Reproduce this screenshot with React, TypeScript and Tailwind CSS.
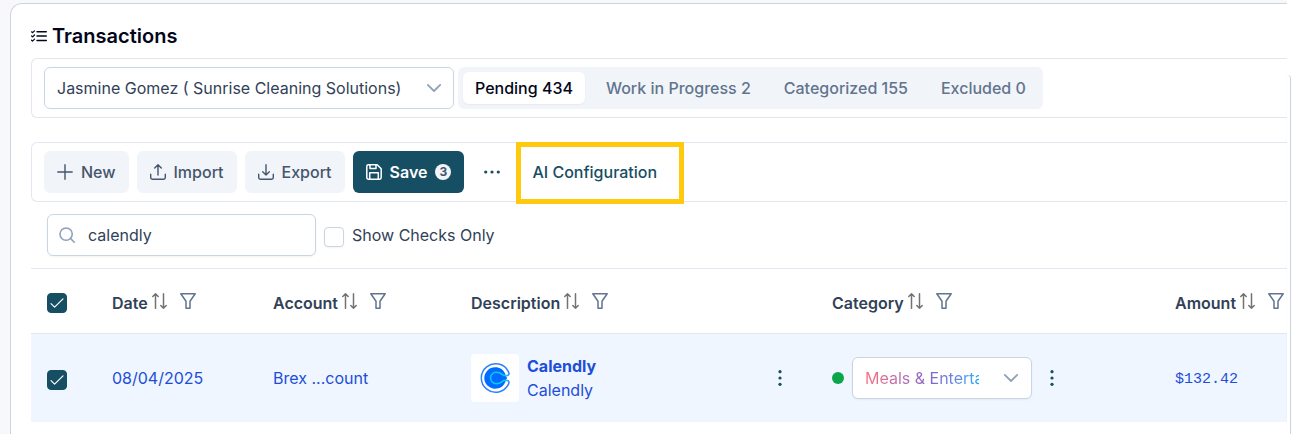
import React from 'react';

type IconProps = { className?: string };

const ListCheckIcon = ({ className }: IconProps) => (
  <svg viewBox="0 0 16 12" className={className} fill="none" stroke="currentColor" strokeLinecap="round" strokeLinejoin="round" aria-hidden="true">
    <path d="M.6 1.8l1 .9L3.5.8M.6 6l1 .9L3.5 5M.6 10.2l1 .9 1.9-1.9" strokeWidth="1.2" />
    <path d="M6 1.7h9.3M6 6h9.3M6 10.5h9.3" strokeWidth="1.4" />
  </svg>
);

const ChevronIcon = ({ className }: IconProps) => (
  <svg viewBox="0 0 16 16" className={className} fill="none" stroke="currentColor" strokeWidth="1.8" strokeLinecap="round" strokeLinejoin="round" aria-hidden="true">
    <path d="M1.8 4.9L8 11l6.2-6.1" />
  </svg>
);

const PlusIcon = ({ className }: IconProps) => (
  <svg viewBox="0 0 16 16" className={className} fill="none" stroke="currentColor" strokeWidth="1.4" strokeLinecap="round" aria-hidden="true">
    <path d="M8 .8v14.4M.8 8h14.4" />
  </svg>
);

const UploadIcon = ({ className }: IconProps) => (
  <svg viewBox="0 0 16 16" className={className} fill="none" stroke="currentColor" strokeWidth="1.4" strokeLinecap="round" strokeLinejoin="round" aria-hidden="true">
    <path d="M8 11V.8M4.7 4L8 .8 11.3 4M.7 10.3v3.3c0 1 .7 1.7 1.7 1.7h11.2c1 0 1.7-.7 1.7-1.7v-3.3" />
  </svg>
);

const DownloadIcon = ({ className }: IconProps) => (
  <svg viewBox="0 0 16 16" className={className} fill="none" stroke="currentColor" strokeWidth="1.4" strokeLinecap="round" strokeLinejoin="round" aria-hidden="true">
    <path d="M8 .8V11M4.7 7.8L8 11l3.3-3.2M.7 10.3v3.3c0 1 .7 1.7 1.7 1.7h11.2c1 0 1.7-.7 1.7-1.7v-3.3" />
  </svg>
);

const SaveIcon = ({ className }: IconProps) => (
  <svg viewBox="0 0 16 16" className={className} fill="none" stroke="currentColor" strokeWidth="1.5" strokeLinejoin="round" aria-hidden="true">
    <path d="M2.4.8h8.8l4 4v8.8c0 1-.7 1.6-1.6 1.6H2.4c-.9 0-1.6-.7-1.6-1.6V2.4C.8 1.5 1.5.8 2.4.8z" />
    <path d="M4 .9v3.7h6V.9M3.7 15V8.7h8.6V15" />
  </svg>
);

const SearchIcon = ({ className }: IconProps) => (
  <svg viewBox="0 0 18 18" className={className} fill="none" stroke="currentColor" strokeWidth="1.8" strokeLinecap="round" aria-hidden="true">
    <circle cx="8" cy="8" r="6.9" />
    <path d="M13 13l4 4" />
  </svg>
);

const SortIcon = ({ className }: IconProps) => (
  <svg viewBox="0 0 16 16" className={className} fill="none" stroke="currentColor" strokeWidth="1.5" strokeLinecap="round" strokeLinejoin="round" aria-hidden="true">
    <path d="M3.5 15.3V.8M.8 3.5L3.5.8l2.7 2.7M11.5.8v14.4M8.8 12.5l2.7 2.7 2.7-2.7" />
  </svg>
);

const FilterIcon = ({ className }: IconProps) => (
  <svg viewBox="0 0 16 16" className={className} fill="none" stroke="currentColor" strokeWidth="1.5" strokeLinejoin="round" aria-hidden="true">
    <path d="M.8.8h14.4L10 8.3v6.9H6V8.3z" />
  </svg>
);

const DotsIcon = ({ className }: IconProps) => (
  <svg viewBox="0 0 16 16" className={className} fill="currentColor" aria-hidden="true">
    <circle cx="1.7" cy="8" r="1.6" />
    <circle cx="8" cy="8" r="1.6" />
    <circle cx="14.3" cy="8" r="1.6" />
  </svg>
);

const CalendlyLogo = ({ className }: IconProps) => (
  <svg viewBox="0 0 32 32" className={className} fill="none" strokeLinecap="round" role="img" aria-label="Calendly">
    <path d="M28.5 13.4C30.2 13 30.4 11.6 29.5 9.8A14.3 14.3 0 1 0 29.5 22.2C30.4 20.4 30.2 19 28.500 18.600" stroke="#2b83fb" strokeWidth="1.5" />
    <path d="M26.200 12C24.800 7.800 21 5.300 16 5.300a10.700 10.700 0 0 0 0 21.400c5 0 8.800-2.500 10.200-6.700L28 16z" fill="#006bff" />
    <path d="M28.500 13.400c-2 .6-3.700.4-5.400-1-1.800-1.500-3.600-2.100-5.900-2.100a5.700 5.700 0 0 0 0 11.400c2.300 0 4.100-.6 5.900-2.100 1.700-1.400 3.400-1.600 5.400-1" stroke="#0acbee" strokeWidth="1.5" />
  </svg>
);

const tabs = ['Pending 434', 'Work in Progress 2', 'Categorized 155', 'Excluded 0'];
const columns = ['Date', 'Account', 'Description', 'Category', 'Amount'];

const CheckedBox: React.FC<{ label: string }> = ({ label }) => (
  <span className="grid size-5">
    <input
      type="checkbox"
      defaultChecked
      aria-label={label}
      className="peer col-start-1 row-start-1 size-5 appearance-none rounded-sm border border-slate-300 bg-white checked:border-[#164e63] checked:bg-[#164e63]"
    />
    <svg viewBox="0 0 14 14" className="pointer-events-none invisible col-start-1 row-start-1 size-3.5 place-self-center text-white peer-checked:visible" fill="none" stroke="currentColor" strokeWidth="1.2" strokeLinecap="round" strokeLinejoin="round" aria-hidden="true">
      <path d="M1 7.6l3.6 3.6L13 2.8" />
    </svg>
  </span>
);

const TransactionsHeader: React.FC = () => (
  <div className="flex h-[60px] items-center gap-1 rounded-l-md border border-r-0 border-slate-200 pl-3">
    <div className="grid w-[410px] items-center">
      <select
        aria-label="Client"
        className="col-start-1 row-start-1 h-[42px] w-full appearance-none rounded-md border border-slate-300 bg-white pr-10 pl-3 text-slate-700"
      >
        <option>Jasmine Gomez ( Sunrise Cleaning Solutions)</option>
      </select>
      <ChevronIcon className="pointer-events-none col-start-1 row-start-1 mr-3 size-4 justify-self-end text-slate-400" />
    </div>
    <div role="tablist" className="flex h-[42px] items-center gap-[9px] rounded-md bg-slate-100 px-[5px] font-medium whitespace-nowrap text-slate-500">
      {tabs.map((tab, i) => (
        <button
          key={tab}
          role="tab"
          aria-selected={i === 0}
          className={i === 0 ? 'h-8 rounded-md bg-white px-3 text-slate-950 shadow-xs' : 'h-8 rounded-md px-3'}
        >
          {tab}
        </button>
      ))}
    </div>
  </div>
);

const Toolbar: React.FC = () => (
  <div className="mt-6 flex h-[60px] items-center gap-2 rounded-l-md border border-r-0 border-slate-200 pl-3 font-medium whitespace-nowrap text-slate-600">
    <button className="flex h-[42px] items-center gap-2 rounded-md bg-slate-100 px-[13px]">
      <PlusIcon className="size-4" /> New
    </button>
    <button className="flex h-[42px] items-center gap-2 rounded-md bg-slate-100 px-[13px]">
      <UploadIcon className="size-4" /> Import
    </button>
    <button className="flex h-[42px] items-center gap-2 rounded-md bg-slate-100 px-[13px]">
      <DownloadIcon className="size-4" /> Export
    </button>
    <button className="flex h-[42px] items-center gap-2 rounded-md bg-[#164e63] px-[13px] font-semibold text-white">
      <SaveIcon className="size-4" /> Save
      <span className="size-4 rounded-full bg-slate-100 text-xs leading-4 font-bold text-slate-600">3</span>
    </button>
    <button aria-label="More actions" className="grid h-[42px] w-10 place-items-center text-[#164e63]">
      <DotsIcon className="size-4" />
    </button>
    <button className="relative h-[42px] px-3 text-[#164e63]">
      AI Configuration
      <span className="absolute -top-[9px] -right-[15px] -bottom-[11px] -left-1 border-5 border-[#ffc90e]" />
    </button>
  </div>
);

const TransactionsTable: React.FC = () => (
  <table className="mt-3 w-full table-fixed border-t border-slate-200 text-left whitespace-nowrap">
    <colgroup>
      <col className="w-[65px]" />
      <col className="w-[161px]" />
      <col className="w-[198px]" />
      <col />
      <col className="w-[343px]" />
      <col className="w-32" />
    </colgroup>
    <thead>
      <tr className="h-[65px] border-b border-slate-200">
        <th className="pt-1 pl-4">
          <CheckedBox label="Select all transactions" />
        </th>
        {columns.map((name) => (
          <th key={name} className="pl-4 font-semibold text-slate-700">
            <div className="flex items-center">
              <span className="pt-1">{name}</span>
              <button aria-label={`Sort by ${name}`} className="ml-1 text-neutral-500">
                <SortIcon className="size-4" />
              </button>
              <button aria-label={`Filter ${name}`} className="ml-3 text-slate-500">
                <FilterIcon className="size-4" />
              </button>
            </div>
          </th>
        ))}
      </tr>
    </thead>
    <tbody>
      <tr className="h-[88px] bg-blue-50 text-[#1d4ed8]">
        <td className="pt-1 pl-4">
          <CheckedBox label="Select Calendly transaction" />
        </td>
        <td className="pl-4">08/04/2025</td>
        <td className="pl-4">Brex ...count</td>
        <td className="pl-4">
          <div className="flex items-center gap-2 pr-7">
            <span className="grid size-12 place-items-center rounded-sm bg-white">
              <CalendlyLogo className="size-8" />
            </span>
            <div className="flex-1">
              <div className="font-bold">Calendly</div>
              <div>Calendly</div>
            </div>
            <button aria-label="Description options" className="text-[#164e63]">
              <DotsIcon className="size-4 rotate-90" />
            </button>
          </div>
        </td>
        <td className="pl-4">
          <div className="flex items-center gap-2">
            <span className="size-3 rounded-full bg-[#0ba54c]" />
            <div className="flex h-[42px] w-[180px] items-center rounded-md border border-slate-300 bg-white px-3 shadow-xs">
              <select
                aria-label="Category"
                className="w-[114px] appearance-none overflow-hidden bg-linear-to-r from-[#ff6f7d] via-[#8560cc] via-55% to-[#1fa8f5] bg-clip-text text-transparent"
              >
                <option>Meals &amp; Entertainment</option>
              </select>
              <ChevronIcon className="pointer-events-none ml-auto size-4 text-slate-400" />
            </div>
            <button aria-label="Category options" className="ml-1 text-[#164e63]">
              <DotsIcon className="size-4 rotate-90" />
            </button>
          </div>
        </td>
        <td className="pt-1 pl-4 font-['Liberation_Mono',monospace] text-[15px]">$132.42</td>
      </tr>
    </tbody>
  </table>
);

const App: React.FC = () => {
  const [search, setSearch] = React.useState('calendly');

  return (
    <div className="flex min-h-screen bg-white font-['Inter',sans-serif] text-base">
      <div className="flex min-w-0 flex-1 bg-[#f8f8fb] pt-[3px] pl-2.5">
        <main className="min-w-0 flex-1 rounded-tl-xl border-t border-l border-slate-300 bg-white pt-[18px] pl-5">
          <h1 className="flex items-center gap-[5px] text-xl leading-7 font-semibold text-slate-950">
            <ListCheckIcon className="h-3 w-4" />
            Transactions
          </h1>
          <div className="mt-2">
            <TransactionsHeader />
            <Toolbar />
          </div>
          <div className="mt-3 flex items-center gap-2 pl-4">
            <div className="grid w-[269px] items-center">
              <input
                type="text"
                aria-label="Search transactions"
                value={search}
                onChange={(e) => setSearch(e.target.value)}
                className="col-start-1 row-start-1 h-[42px] w-full rounded-md border border-slate-300 bg-white pr-3 pl-10 text-slate-700 shadow-xs"
              />
              <SearchIcon className="pointer-events-none col-start-1 row-start-1 ml-3 size-4 text-slate-400" />
            </div>
            <label className="flex items-center gap-2 text-slate-700">
              <input type="checkbox" className="mt-1 size-5 appearance-none rounded-sm border border-slate-300 bg-white shadow-xs" />
              Show Checks Only
            </label>
          </div>
          <TransactionsTable />
        </main>
      </div>
      <div className="flex w-[7px] pt-[75px]">
        <div className="w-1 rounded-tr-lg border-r border-slate-300 shadow-xs" />
      </div>
    </div>
  );
};

export default App;
